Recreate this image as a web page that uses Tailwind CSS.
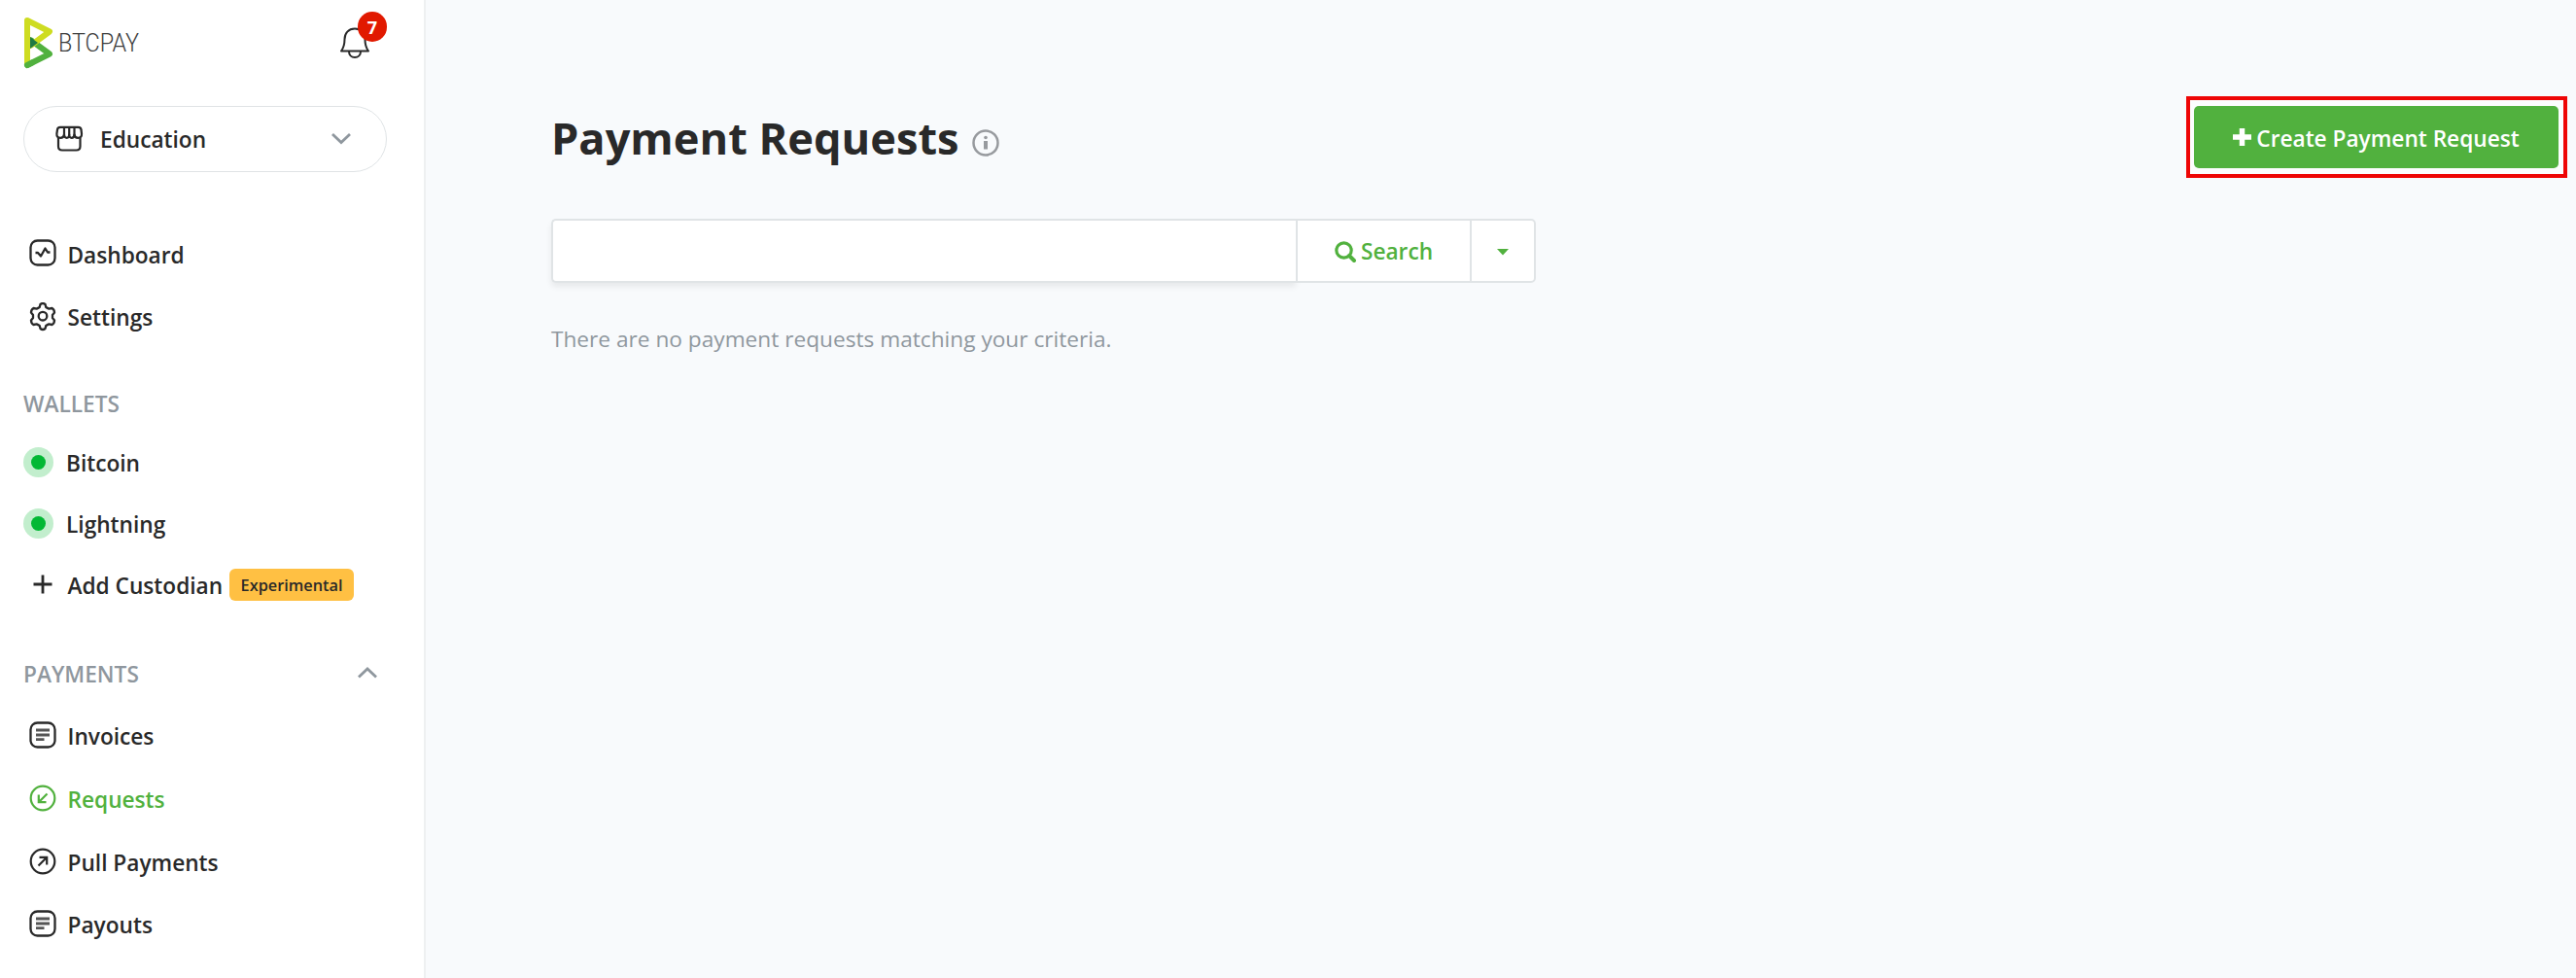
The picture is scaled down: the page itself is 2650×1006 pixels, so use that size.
<!DOCTYPE html>
<html lang="en">
<head>
    <meta charset="UTF-8">
    <meta name="viewport" content="width=device-width, initial-scale=1.0">
    <title>Payment Requests</title>
    <script src="https://cdn.jsdelivr.net/npm/@tailwindcss/browser@4"></script>
</head>
<body class="flex h-screen overflow-hidden bg-[#f8fafc] font-['Open_Sans','Noto_Sans',sans-serif] text-[22.66px] leading-[34px] text-[#292929]">
    <!-- Sidebar -->
    <aside class="flex w-[438px] shrink-0 flex-col border-r-2 border-[#eef0f1] bg-white font-semibold">
        <!-- Logo and notifications -->
        <header class="flex h-[109px] items-start justify-between pl-6 pr-[38px]">
            <svg class="mt-4 h-14 w-[124px]" viewBox="0 0 124 56" fill="none" aria-label="BTCPay">
                <path d="M4 51 27 39.500 8 25.500" stroke="#51b13e" stroke-width="6" stroke-linecap="round" stroke-linejoin="round"/>
                <path d="M4 49V5L27 16.500 8 30.500" stroke="#cedc21" stroke-width="6" stroke-linecap="round" stroke-linejoin="round"/>
                <path d="M7 22v12l8-6z" fill="#1e7a44"/>
                <path d="M4 51l5-2.500" stroke="#51b13e" stroke-width="6" stroke-linecap="round"/>
                <text x="36" y="37" textLength="83" lengthAdjust="spacingAndGlyphs" font-family="Roboto" font-weight="300" font-size="25" fill="#3c3c3c">BTCPAY</text>
            </svg>
            <button class="relative mt-[27px] mr-[17px] h-9 w-8">
                <svg class="h-9 w-8" viewBox="0 0 32 36" fill="none" stroke="currentColor" stroke-width="2" stroke-linejoin="round">
                    <path d="M2 25.500C5 21.500 5.500 18 5.500 13.500 5.500 7 9.500 2.500 16 2.500S26.500 7 26.500 13.500C26.500 18 27 21.500 30 25.500Z"/>
                    <path d="M10 26c0 3.500 2.500 6 6 6s6-2.500 6-6"/>
                </svg>
                <span class="absolute -top-[15px] left-[19px] flex h-[31px] w-[30px] items-center justify-center rounded-full bg-[#e11900] text-[18px] font-bold text-white">7</span>
            </button>
        </header>

        <!-- Store selector -->
        <button class="mx-6 mr-[38px] flex h-[68px] shrink-0 items-center rounded-full border-[1.5px] border-[#e0e4e6] pl-[31px] pr-[36px]">
            <svg class="h-[30px] w-[30px]" viewBox="0 0 30 30" fill="none" stroke="currentColor" stroke-width="2.200" stroke-linejoin="round">
                <path d="M4 14V22.500q0 4 4 4H22.500q4 0 4-4V14"/>
                <path d="M6 2.800H24.500q2.800 0 3 2.700L28 9.500q.3 4.300-3.800 4.300-3.300 0-3.700-3.300-.4 3.300-2.800 3.300T15.200 10.500q0 3.300-2.500 3.300T10 10.500Q9.500 13.800 6.200 13.800 2.100 13.800 2.400 9.500L3 5.500Q3.200 2.800 6 2.800Z"/>
                <path d="M10 3v8M15.200 3v8M20.500 3v8"/>
            </svg>
            <span class="ml-[17px] pt-[2px]">Education</span>
            <svg class="ml-auto h-5 w-5" viewBox="0 0 20 20" fill="none" stroke="#8f979e" stroke-width="2.800"><path d="M1 5 10 13.500l9-8.500"/></svg>
        </button>

        <nav class="flex flex-col pl-6 pr-[48px] pt-[52px]">
            <a class="flex h-[64.500px] items-center gap-[10.500px] pl-[5px]">
                <svg class="h-[30px] w-[30px]" viewBox="0 0 30 30" fill="none" stroke="currentColor" stroke-width="2.300"><rect x="2.500" y="1.500" width="25" height="25" rx="7"/><path d="M7.500 14H10l3 3.500 4.500-8 2.500 4h2.500" stroke-linejoin="round"/></svg>
                <span class="pt-[3px]">Dashboard</span>
            </a>
            <a class="flex h-[64.500px] items-center gap-[10.500px] pl-[5px]">
                <svg class="h-[30px] w-[30px]" viewBox="0 0 30 30" fill="none" stroke="currentColor" stroke-width="2.300" stroke-linejoin="round">
                    <path d="M12.500 2q2.500-2 5 0l.8 3q1.500 1 3 1.600l3.200-.6q2.500 1.500 2.500 4.500l-2 2.500v3l2 2.500q0 3-2.500 4.500l-3.200-.6q-1.500.6-3 1.600l-.8 3q-2.500 2-5 0l-.8-3q-1.500-1-3-1.600l-3.200.6Q3 21.500 3 18.500l2-2.500v-3L3 10.500q0-3 2.500-4.500l3.200.6q1.500-.6 3-1.600z"/>
                    <circle cx="15" cy="14.200" r="4.300"/>
                </svg>
                <span class="pt-[2px]">Settings</span>
            </a>

            <h2 class="mt-[37px] flex h-[40px] items-center pt-[2px] text-[#8f979e]">WALLETS</h2>
            <a class="mt-[9px] flex h-[63px] items-center gap-[13px]">
                <span class="flex h-[31px] w-[31px] items-center justify-center rounded-full bg-[#c2eecd]"><span class="h-[15px] w-[15px] rounded-full bg-[#02b834]"></span></span>
                <span class="pt-[2px]">Bitcoin</span>
            </a>
            <a class="flex h-[63px] items-center gap-[13px]">
                <span class="flex h-[31px] w-[31px] items-center justify-center rounded-full bg-[#c2eecd]"><span class="h-[15px] w-[15px] rounded-full bg-[#02b834]"></span></span>
                <span class="pt-[2px]">Lightning</span>
            </a>
            <a class="flex h-[63px] items-center gap-[10.500px] pl-[5px]">
                <svg class="h-[30px] w-[30px]" viewBox="0 0 30 30" fill="none" stroke="currentColor" stroke-width="2.800"><path d="M15 4.500v19M5.500 14h19"/></svg>
                <span class="pt-[2px]">Add Custodian</span>
                <span class="-ml-[4px] flex h-[33px] items-center rounded-[6px] bg-[#ffc043] px-3 pt-px text-[16.300px]">Experimental</span>
            </a>

            <h2 class="mt-[40px] flex h-[40px] items-center justify-between text-[#8f979e]">
                <span class="pt-[2px]">PAYMENTS</span>
                <svg class="h-5 w-5" viewBox="0 0 20 20" fill="none" stroke="currentColor" stroke-width="2.800"><path d="M1 13.500 10 5l9 8.500"/></svg>
            </h2>
            <a class="mt-[12px] flex h-[64.700px] items-center gap-[10.500px] pl-[5px]">
                <svg class="h-[30px] w-[30px]" viewBox="0 0 30 30" fill="none" stroke="currentColor" stroke-width="2.300"><rect x="2.500" y="1.500" width="25" height="25" rx="7"/><path stroke="#555" stroke-width="2.800" d="M8 9h14M8 14h14M8 18.700h8.500"/></svg>
                <span class="pt-[2px]">Invoices</span>
            </a>
            <a class="flex h-[64.700px] items-center gap-[10.500px] pl-[5px] text-[#51b13e]">
                <svg class="h-[30px] w-[30px]" viewBox="0 0 30 30" fill="none" stroke="currentColor" stroke-width="2.200"><circle cx="15" cy="14" r="12.300"/><path d="M19.500 9.500 11 18M10.800 10.500v7.700h7.700"/></svg>
                <span class="pt-[2px]">Requests</span>
            </a>
            <a class="flex h-[64.700px] items-center gap-[10.500px] pl-[5px]">
                <svg class="h-[30px] w-[30px]" viewBox="0 0 30 30" fill="none" stroke="currentColor" stroke-width="2.200"><circle cx="15" cy="14" r="12.300"/><path d="M10.500 18.500 19 10M11.500 9.800h7.700v7.700"/></svg>
                <span class="pt-[2px]">Pull Payments</span>
            </a>
            <a class="flex h-[64.700px] items-center gap-[10.500px] pl-[5px]">
                <svg class="h-[30px] w-[30px]" viewBox="0 0 30 30" fill="none" stroke="currentColor" stroke-width="2.300"><rect x="2.500" y="1.500" width="25" height="25" rx="7"/><path stroke="#555" stroke-width="2.800" d="M8 9h14M8 14h14M8 18.700h8.500"/></svg>
                <span class="pt-[2px]">Payouts</span>
            </a>
        </nav>
    </aside>

    <!-- Main content -->
    <main class="flex grow flex-col pl-[129px] pr-[9px] pt-[99px]">
        <div class="flex h-[84px] items-center justify-between">
            <h1 class="flex items-center pt-px text-[45.200px] font-bold leading-[60px]">
                Payment Requests
                <svg class="ml-[13px] mt-[10px] h-7 w-7" viewBox="0 0 28 28" fill="none" stroke="#979a9e" stroke-width="2.500"><circle cx="14" cy="14" r="12.500"/><path d="M14 12v8.500" stroke-width="4"/><circle cx="14" cy="8.500" r="1.800" fill="#979a9e" stroke="none"/></svg>
            </h1>
            <div class="border-4 border-[#ee0505] bg-white/60 py-[6px] pl-1 pr-[5px]">
                <button class="flex h-16 w-[375px] items-center justify-center gap-[5px] rounded-[5px] bg-[#51b13e] font-semibold text-white">
                    <svg class="h-[18px] w-[19px]" viewBox="0 0 19 18" fill="none" stroke="currentColor" stroke-width="5.500"><path d="M9.500 0v18M0 9h19"/></svg>
                    <span class="pt-[3px]">Create Payment Request</span>
                </button>
            </div>
        </div>

        <!-- Search -->
        <form class="mt-[42px] flex h-[66px] w-[1013px]">
            <input type="text" class="w-[766px] rounded-l-[5px] border-2 border-r-0 border-[#e0e4e6] bg-white shadow-[0_4px_6px_rgba(0,0,0,0.07)]">
            <button type="button" class="flex w-[179px] items-center justify-center gap-[5px] border-2 border-r-0 border-[#e0e4e6] bg-white font-semibold text-[#51b13e]">
                <svg class="mt-px h-[22px] w-[22px]" viewBox="0 0 22 22" fill="none" stroke="currentColor" stroke-width="3.200"><circle cx="9.500" cy="9.500" r="7.700"/><path d="M15 15l5 5" stroke-width="4" stroke-linecap="round"/></svg>
                <span class="pt-[2px]">Search</span>
            </button>
            <button type="button" class="flex w-[68px] items-center justify-center rounded-r-[5px] border-2 border-[#e0e4e6] bg-white text-[#51b13e]">
                <svg class="mt-[2px] h-[7px] w-3" viewBox="0 0 12 7" fill="currentColor"><path d="M0 0h12L6 6.500z"/></svg>
            </button>
        </form>

        <p class="mt-[41px] text-[#8f979e]">There are no payment requests matching your criteria.</p>
    </main>
</body>
</html>
